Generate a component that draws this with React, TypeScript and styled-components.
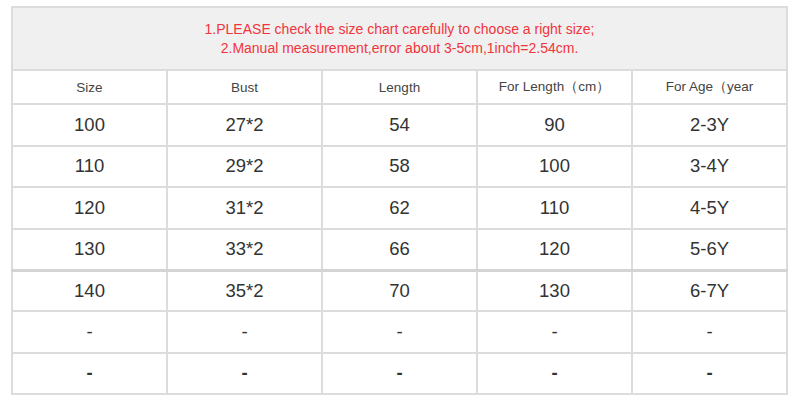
import { FC } from 'react';
import styled, { createGlobalStyle } from 'styled-components';

const GlobalStyle = createGlobalStyle`
    html, body {
        margin: 0;
        padding: 0;
        background: #ffffff;
    }
`;

const Page = styled.div`
    padding: 6px 0 0 11px;
    font-family: 'Liberation Sans', Arial, sans-serif;
`;

const Table = styled.table`
    width: 777px;
    border-collapse: collapse;
    table-layout: fixed;
    color: #333;
`;

const Notice = styled.td`
    height: 61px;
    background: #f0f0f0;
    border: 2px solid #dcdcdc;
    text-align: center;
    color: #f2343c;
    font-size: 14px;
    line-height: 19px;
    padding: 0;
`;

const HeadCell = styled.th`
    height: 32px;
    border: 2px solid #dcdcdc;
    font-weight: normal;
    font-size: 13.5px;
    color: #444;
    text-align: center;
    padding: 0;
`;

const Cell = styled.td<{ $heavy?: boolean; $bold?: boolean }>`
    height: ${(p) => (p.$heavy ? 38 : 39.5)}px;
    border: 2px solid #dcdcdc;
    border-top: ${(p) => (p.$heavy ? '3px solid #d4d4d4' : '2px solid #dcdcdc')};
    font-size: 18.5px;
    font-weight: ${(p) => (p.$bold ? 'bold' : 'normal')};
    color: #333;
    text-align: center;
    padding: 0;
`;

const columns = ['Size', 'Bust', 'Length', 'For Length\uff08cm\uff09', 'For Age\uff08year'];

const rows: string[][] = [
    ['100', '27*2', '54', '90', '2-3Y'],
    ['110', '29*2', '58', '100', '3-4Y'],
    ['120', '31*2', '62', '110', '4-5Y'],
    ['130', '33*2', '66', '120', '5-6Y'],
    ['140', '35*2', '70', '130', '6-7Y'],
    ['-', '-', '-', '-', '-'],
    ['-', '-', '-', '-', '-'],
];

const App: FC = () => {
    return (
        <>
            <GlobalStyle />
            <Page>
                <Table>
                    <tbody>
                        <tr>
                            <Notice colSpan={5}>
                                1.PLEASE check the size chart carefully to choose a right size;
                                <br />
                                2.Manual measurement,error about 3-5cm,1inch=2.54cm.
                            </Notice>
                        </tr>
                        <tr>
                            {columns.map((c) => (
                                <HeadCell key={c}>{c}</HeadCell>
                            ))}
                        </tr>
                        {rows.map((r, i) => (
                            <tr key={i}>
                                {r.map((v, j) => (
                                    <Cell key={j} $heavy={i === 4} $bold={i === 6}>
                                        {v}
                                    </Cell>
                                ))}
                            </tr>
                        ))}
                    </tbody>
                </Table>
            </Page>
        </>
    );
};

export default App;
